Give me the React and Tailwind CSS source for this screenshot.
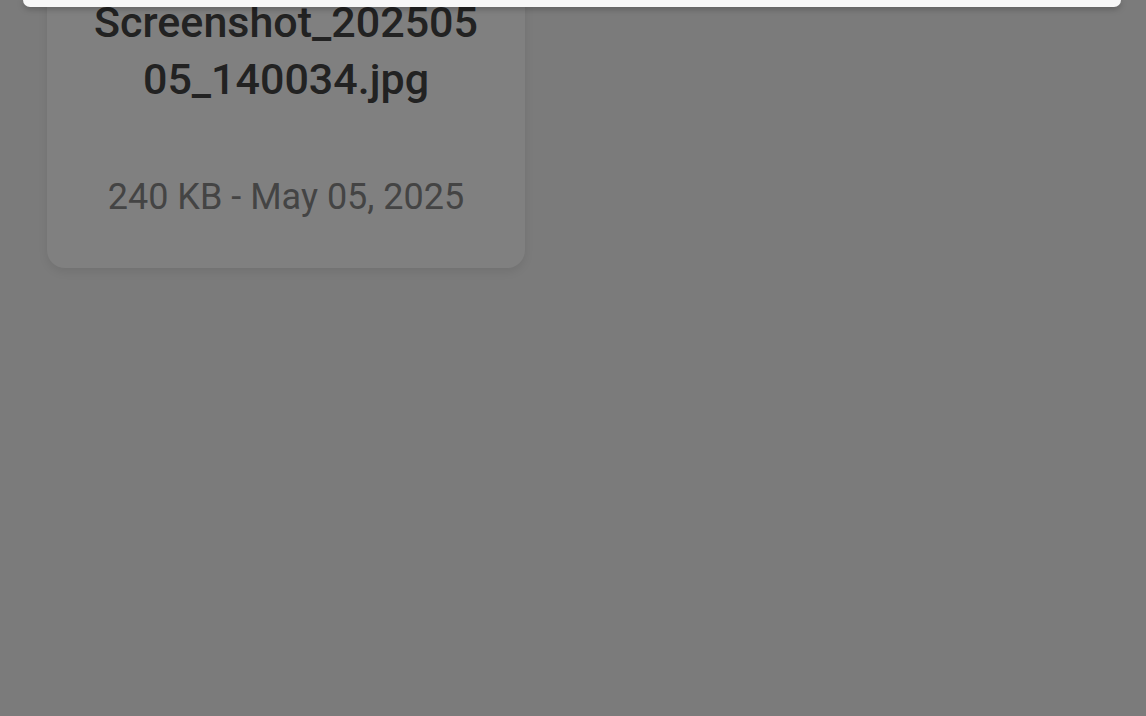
import React from 'react';

const App = () => {
  const file = { name: 'Screenshot_20250505_140034.jpg', size: '240 KB', date: 'May 05, 2025' };

  return (
    <div className="relative w-full h-[716px] overflow-hidden bg-[#7b7b7b]" style={{ fontFamily: 'Roboto, "Noto Sans", sans-serif' }}>
      {/* Dimmed page content, scrolled so the card top sits under the sheet */}
      <div className="pl-[47px] -mt-[40px]">
        <div className="w-[478px] rounded-[18px] bg-[#808080] shadow-[0_4px_10px_rgba(0,0,0,0.08)] px-[40px] pt-[34px] pb-[49px] text-center">
          <p className="text-[43px] leading-[57px] font-medium text-[#222222] break-all">{file.name}</p>
          <p className="mt-[68px] text-[36px] leading-[43px] text-[#444444]">
            {file.size} - {file.date}
          </p>
        </div>
      </div>

      {/* Bottom edge of the open sheet above */}
      <div className="absolute top-0 left-[23px] w-[1098px] h-[7px] bg-[#f7f7f7] rounded-b-[8px] shadow-[0_2px_6px_rgba(0,0,0,0.25)]"></div>
    </div>
  );
};

export default App;
